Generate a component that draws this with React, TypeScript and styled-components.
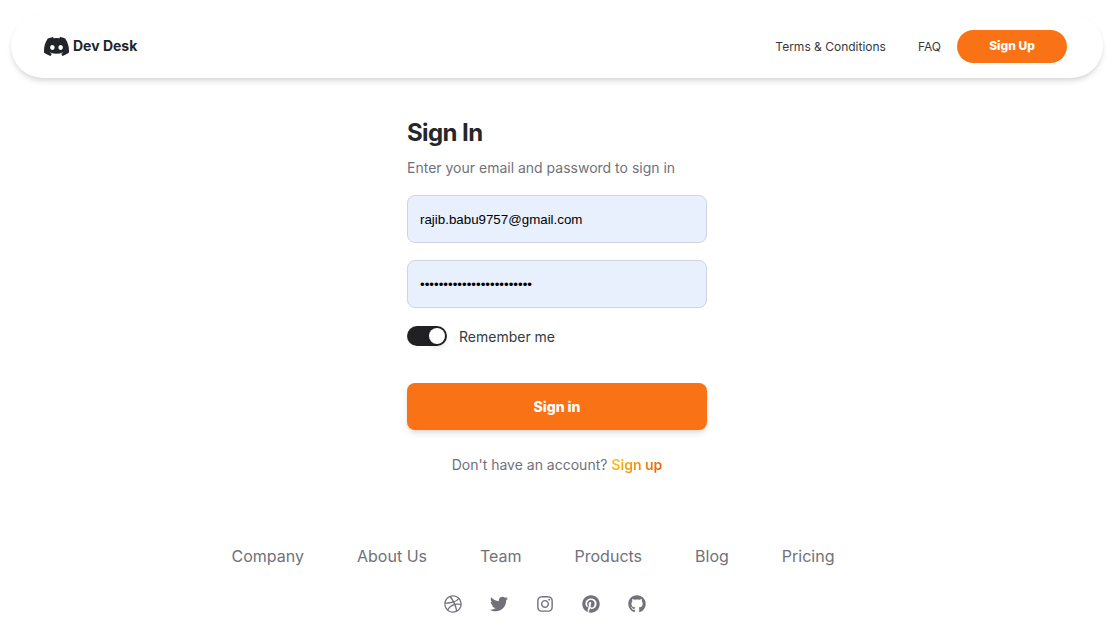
import React from "react";
import styled, { createGlobalStyle } from "styled-components";
import {
  FaDribbble,
  FaGithub,
  FaInstagram,
  FaPinterest,
  FaTwitter,
} from "react-icons/fa";
import { BsDiscord } from "react-icons/bs";

const GlobalStyle = createGlobalStyle`
  *, *::before, *::after { box-sizing: border-box; }
  body {
    margin: 0;
    background: #ffffff;
    color: #27272a;
    font-family: Inter, "Open Sans", sans-serif;
    font-size: 14px;
    line-height: 20px;
  }
  a { color: inherit; text-decoration: none; }
`;

const Page = styled.div`
  padding: 14px 9px 16px 11px;
`;

const Header = styled.header`
  display: flex;
  align-items: center;
  justify-content: space-between;
  height: 64px;
  padding: 0 36px 0 33px;
  border-radius: 32px;
  background: #ffffff;
  box-shadow: 0 4px 6px -1px rgba(0, 0, 0, 0.12), 0 2px 4px -1px rgba(0, 0, 0, 0.07);
`;

const Brand = styled.a`
  display: flex;
  align-items: center;
  gap: 4px;
  font-weight: 700;
  color: #212529;
  svg { width: 25px; height: 25px; }
`;

const Nav = styled.nav`
  display: flex;
  align-items: center;
  font-size: 12px;
`;

const NavLink = styled.a`
  padding: 2px 16px 0;
  color: #343a40;
`;

const PillButton = styled.button`
  width: 110px;
  height: 33px;
  padding: 0;
  border: 0;
  border-radius: 17px;
  background: #f97316;
  color: #ffffff;
  font: 800 12px/16px Inter, sans-serif;
`;

const Form = styled.form`
  display: flex;
  flex-direction: column;
  width: 300px;
  max-width: 100%;
  margin: 39px auto 0;
`;

const Title = styled.h1`
  margin: 0;
  font-size: 24px;
  line-height: 32px;
  font-weight: 700;
  letter-spacing: -0.025em;
`;

const Subtitle = styled.p`
  margin: 9px 0 17px;
  color: #71717a;
`;

const Field = styled.input`
  width: 100%;
  height: 48px;
  margin-bottom: 17px;
  padding: 0 12px;
  border: 1px solid #d1d5db;
  border-radius: 8px;
  background: #e8f0fe;
  color: #000000;
  outline: none;
  font-family: "Liberation Sans", Arial, sans-serif;
`;

const Remember = styled.label`
  display: flex;
  align-items: flex-start;
  gap: 12px;
  margin-top: 1px;
  line-height: 22px;
  color: #343a40;
`;

const Switch = styled.input`
  appearance: none;
  display: flex;
  align-items: center;
  justify-content: flex-start;
  width: 40px;
  height: 20px;
  margin: 0;
  padding: 0 2px;
  border-radius: 10px;
  background: #a1a1aa;
  &::before {
    content: "";
    width: 16px;
    height: 16px;
    border-radius: 50%;
    background: #ffffff;
    box-shadow: 0 4px 6px rgba(0, 0, 0, 0.12);
  }
  &:checked {
    justify-content: flex-end;
    background: #212124;
  }
`;

const SubmitButton = styled.button`
  height: 47px;
  margin-top: 35px;
  border: 0;
  border-radius: 8px;
  background: #f97316;
  color: #ffffff;
  font: 800 14px/20px Inter, sans-serif;
  box-shadow: 0 4px 7px -1px rgba(0, 0, 0, 0.11), 0 2px 4px -1px rgba(0, 0, 0, 0.07);
`;

const Prompt = styled.p`
  margin: 25px 0 0;
  text-align: center;
  color: #71717a;
`;

const SignUpLink = styled.a`
  font-weight: 600;
  color: transparent;
  background: linear-gradient(310deg, #ea580c, #facc15);
  background-clip: text;
  -webkit-background-clip: text;
`;

const Footer = styled.footer`
  display: flex;
  flex-direction: column;
  align-items: center;
  margin-top: 69px;
  color: #71717a;
`;

const FooterLinks = styled.nav`
  display: flex;
  flex-wrap: wrap;
  gap: 24px 53px;
  padding-right: 48px;
  font-size: 16px;
  line-height: 24px;
`;

const SocialLinks = styled.nav`
  display: flex;
  gap: 28px;
  margin-top: 27px;
  padding-right: 24px;
  svg { display: block; height: 18px; width: auto; }
`;

const pages = ["Company", "About Us", "Team", "Products", "Blog", "Pricing"];

const socials = [
  { name: "Dribbble", Icon: FaDribbble },
  { name: "Twitter", Icon: FaTwitter },
  { name: "Instagram", Icon: FaInstagram },
  { name: "Pinterest", Icon: FaPinterest },
  { name: "GitHub", Icon: FaGithub },
];

export default function App() {
  return (
    <>
      <GlobalStyle />
      <Page>
        <Header>
          <Brand href="#home">
            <BsDiscord aria-hidden />
            Dev Desk
          </Brand>
          <Nav>
            <NavLink href="#terms">Terms &amp; Conditions</NavLink>
            <NavLink href="#faq">FAQ</NavLink>
            <PillButton type="button">Sign Up</PillButton>
          </Nav>
        </Header>
        <main>
          <Form onSubmit={(e) => e.preventDefault()}>
            <Title>Sign In</Title>
            <Subtitle>Enter your email and password to sign in</Subtitle>
            <Field
              type="email"
              aria-label="Email"
              defaultValue="rajib.babu9757@gmail.com"
            />
            <Field
              type="password"
              aria-label="Password"
              defaultValue="abcdefghijklmnopqrstuvwx"
            />
            <Remember>
              <Switch type="checkbox" role="switch" defaultChecked />
              Remember me
            </Remember>
            <SubmitButton type="submit">Sign in</SubmitButton>
            <Prompt>
              Don't have an account? <SignUpLink href="#signup">Sign up</SignUpLink>
            </Prompt>
          </Form>
        </main>
        <Footer>
          <FooterLinks>
            {pages.map((page) => (
              <a key={page} href="#footer">{page}</a>
            ))}
          </FooterLinks>
          <SocialLinks>
            {socials.map(({ name, Icon }) => (
              <a key={name} href="#social" aria-label={name}>
                <Icon aria-hidden />
              </a>
            ))}
          </SocialLinks>
        </Footer>
      </Page>
    </>
  );
}
